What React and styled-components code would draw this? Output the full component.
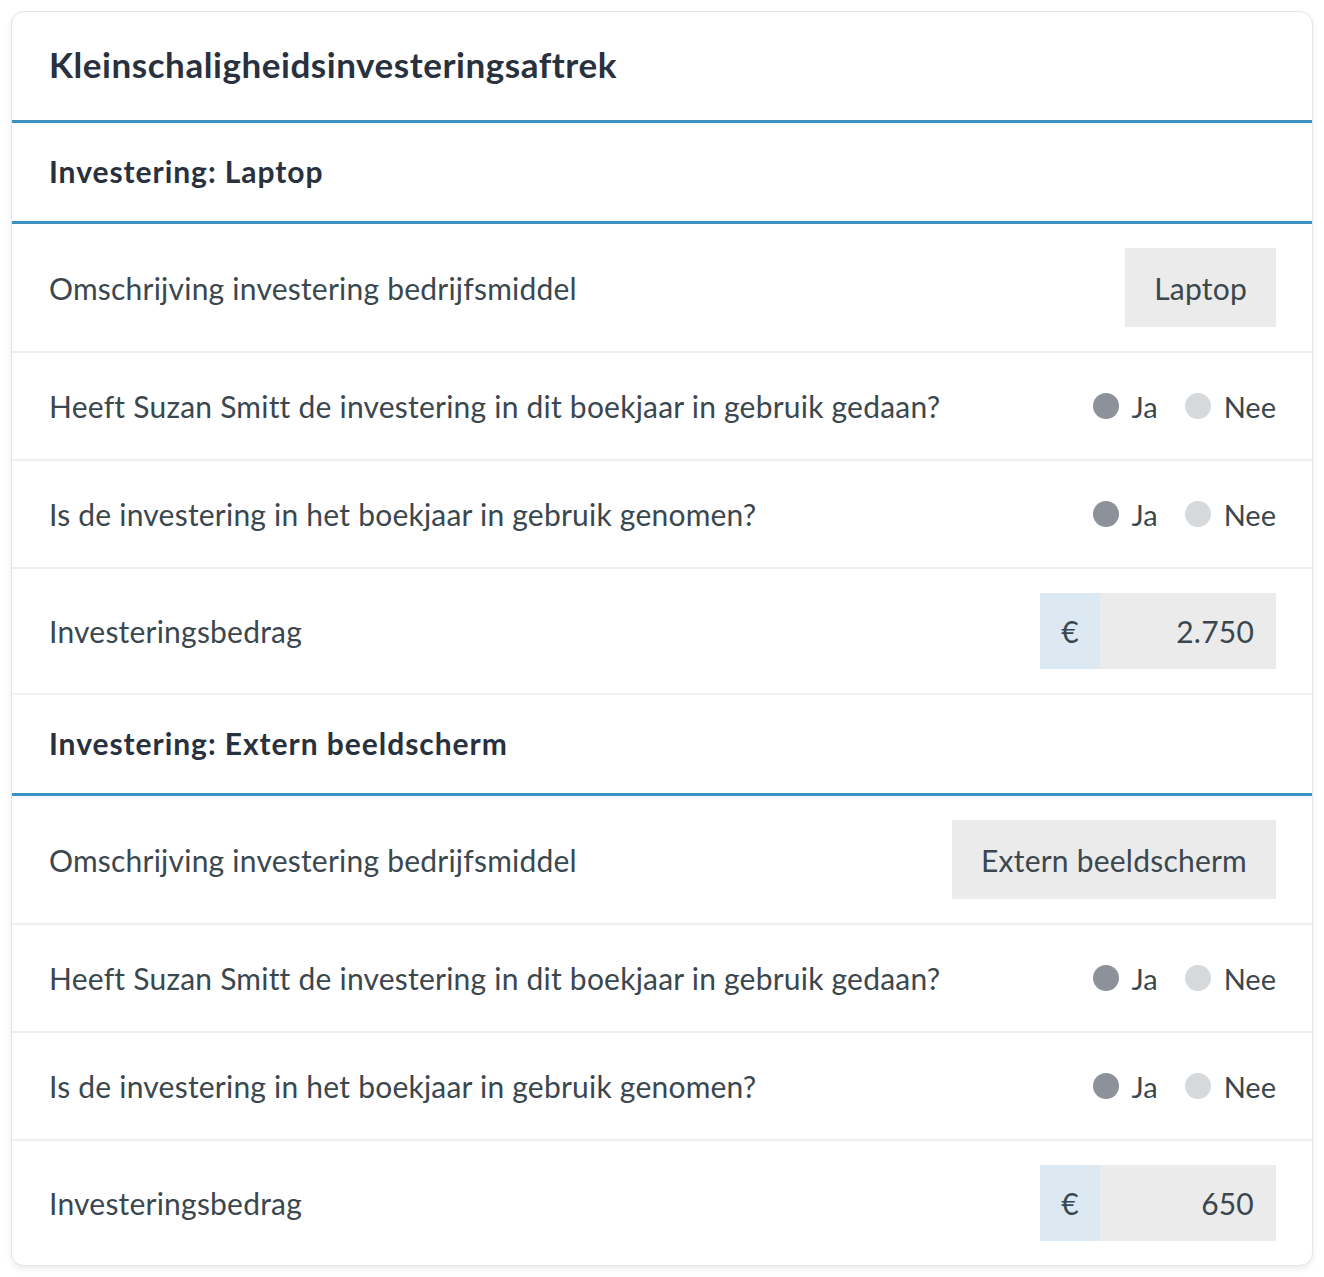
import React from 'react';
import styled, { createGlobalStyle } from 'styled-components';

const GlobalStyle = createGlobalStyle`
	* {
		box-sizing: border-box;
	}
	body {
		margin: 0;
		background: #ffffff;
		font-family: 'Lato', 'Noto Sans', sans-serif;
		color: #3b474e;
	}
`;

const investments = [
	{ name: 'Laptop', amount: '2.750' },
	{ name: 'Extern beeldscherm', amount: '650' },
];

const RadioChoice = ({ value }) => (
	<Radios>
		<RadioOption>
			<Dot $checked={value === 'ja'} />
			Ja
		</RadioOption>
		<RadioOption>
			<Dot $checked={value === 'nee'} />
			Nee
		</RadioOption>
	</Radios>
);

const App = () => {
	return (
		<Page>
			<GlobalStyle />
			<Card>
				<CardTitle>Kleinschaligheidsinvesteringsaftrek</CardTitle>
				{investments.map((item, index) => (
					<section key={index}>
						<SectionTitle>Investering: {item.name}</SectionTitle>
						<Row>
							<Label>Omschrijving investering bedrijfsmiddel</Label>
							<TextField>{item.name}</TextField>
						</Row>
						<Row>
							<Label>Heeft Suzan Smitt de investering in dit boekjaar in gebruik gedaan?</Label>
							<RadioChoice value="ja" />
						</Row>
						<Row>
							<Label>Is de investering in het boekjaar in gebruik genomen?</Label>
							<RadioChoice value="ja" />
						</Row>
						<Row $last={index === investments.length - 1}>
							<Label>Investeringsbedrag</Label>
							<MoneyField>
								<Currency>€</Currency>
								<Amount>{item.amount}</Amount>
							</MoneyField>
						</Row>
					</section>
				))}
			</Card>
		</Page>
	);
};

const Page = styled.div`
	padding: 11px 11px 12px;
`;

const Card = styled.div`
	background: #ffffff;
	border: 1px solid #e3e5e8;
	border-radius: 13px;
	box-shadow: 0 3px 6px rgba(0, 0, 0, 0.08);
	overflow: hidden;
`;

const CardTitle = styled.h1`
	margin: 0;
	height: 111px;
	padding: 0 37px 5px;
	display: flex;
	align-items: center;
	font-size: 35px;
	letter-spacing: 0.55px;
	font-weight: 700;
	color: #28313d;
	border-bottom: 3px solid #3d93bf;
`;

const SectionTitle = styled.h2`
	margin: 0;
	height: 101px;
	padding: 0 37px 3px;
	display: flex;
	align-items: center;
	font-size: 30px;
	letter-spacing: 0.95px;
	font-weight: 700;
	color: #28313d;
	border-bottom: 3px solid #3d93bf;
`;

const Row = styled.div`
	display: flex;
	align-items: center;
	justify-content: space-between;
	min-height: 108px;
	padding: 24px 36px 24px 37px;
	border-bottom: ${(p) => (p.$last ? 'none' : '2px solid #eef0f1')};
`;

const Label = styled.span`
	font-size: 30px;
	letter-spacing: 0.22px;
	color: #3b474e;
`;

const TextField = styled.div`
	height: 79px;
	padding: 0 29px;
	display: flex;
	align-items: center;
	background: #ebebeb;
	font-size: 30px;
	letter-spacing: 0.22px;
	color: #3b474e;
`;

const Radios = styled.div`
	display: flex;
	align-items: center;
	gap: 27px;
`;

const RadioOption = styled.label`
	display: flex;
	align-items: center;
	gap: 13px;
	font-size: 29px;
	color: #3b474e;
`;

const Dot = styled.span`
	width: 26px;
	height: 26px;
	border-radius: 50%;
	background: ${(p) => (p.$checked ? '#8d9199' : '#d6d9db')};
`;

const MoneyField = styled.div`
	display: flex;
	height: 76px;
	width: 236px;
	font-size: 30px;
	letter-spacing: 0.22px;
	color: #3b474e;
`;

const Currency = styled.div`
	width: 60px;
	display: flex;
	align-items: center;
	justify-content: center;
	background: #dce9f3;
`;

const Amount = styled.div`
	flex: 1;
	display: flex;
	align-items: center;
	justify-content: flex-end;
	padding-right: 22px;
	background: #ebebeb;
`;

export default App;
